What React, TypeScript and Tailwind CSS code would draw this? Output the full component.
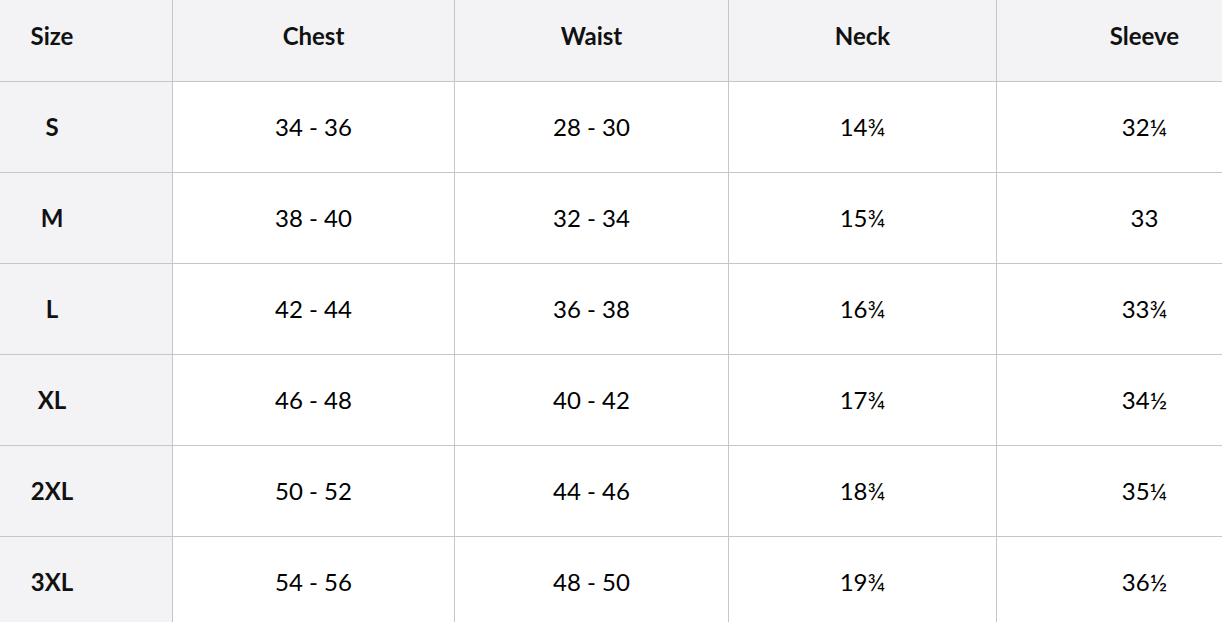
import React from "react";

const header = ["Size", "Chest", "Waist", "Neck", "Sleeve"];
const rows = [
  ["S", "34 - 36", "28 - 30", "14¾", "32¼"],
  ["M", "38 - 40", "32 - 34", "15¾", "33"],
  ["L", "42 - 44", "36 - 38", "16¾", "33¾"],
  ["XL", "46 - 48", "40 - 42", "17¾", "34½"],
  ["2XL", "50 - 52", "44 - 46", "18¾", "35¼"],
  ["3XL", "54 - 56", "48 - 50", "19¾", "36½"],
];

export default function App() {
  return (
    <div
      className="w-[1222px] h-[622px] overflow-hidden bg-white text-[#111]"
      style={{ fontFamily: "Lato, 'Open Sans', sans-serif" }}
    >
      <div className="grid w-[1293px] grid-cols-[173px_282px_274px_268px_296px]">
        {header.map((h, i) => (
          <div
            key={h}
            className={`h-[82px] bg-[#f3f3f5] border-b border-r border-[#c6c6c6] flex items-center justify-center pb-[10px] text-[24px] font-bold ${i === 0 ? "pr-[68px]" : ""}`}
          >
            {h}
          </div>
        ))}
        {rows.map((r) =>
          r.map((c, i) => (
            <div
              key={r[0] + i}
              className={`h-[91px] border-b border-r border-[#c6c6c6] flex items-center justify-center ${
                i === 0
                  ? "bg-[#f3f3f5] pr-[68px] font-bold text-[24px]"
                  : "bg-white text-[24px] text-black"
              }`}
            >
              {c}
            </div>
          ))
        )}
      </div>
    </div>
  );
}
